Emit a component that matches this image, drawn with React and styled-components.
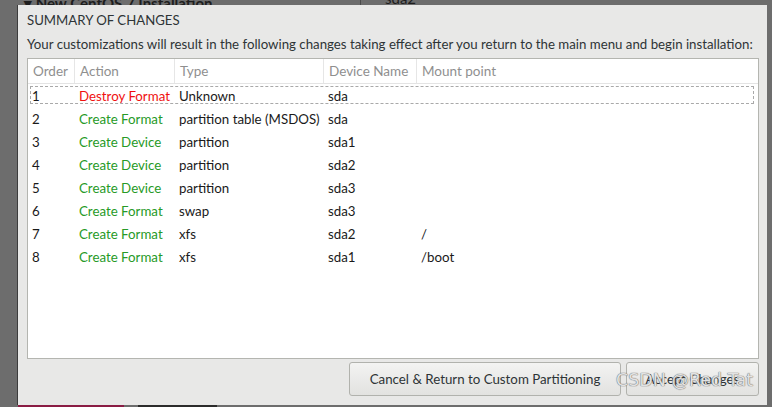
import styled, { createGlobalStyle } from "styled-components";

const GlobalStyle = createGlobalStyle`
  html, body {
    margin: 0;
    padding: 0;
    width: 772px;
    height: 407px;
    overflow: hidden;
    background: #6d6d6d;
    font-family: "Lato", "Open Sans", sans-serif;
  }
`;

const Screen = styled.div`
  position: relative;
  width: 772px;
  height: 407px;
  background: #6d6d6d;
`;

// what sits behind the modal, mostly hidden
const BehindHeader = styled.div`
  position: absolute;
  top: -11px;
  left: 24px;
  right: 0;
  display: flex;
  align-items: center;
  height: 18px;
  color: #1e1e1e;
  font-size: 15px;
  font-weight: 700;
`;

const BehindTitle = styled.div`
  width: 336px;
  border-right: 1px solid #4a4a4a;
  height: 30px;
  display: flex;
  align-items: flex-end;
`;

const BehindDevice = styled.div`
  padding-left: 24px;
  font-weight: 400;
  align-self: flex-end;
`;

const BehindBar = styled.div`
  position: absolute;
  bottom: 0;
  left: ${(p) => p.$left}px;
  width: ${(p) => p.$width}px;
  height: 2px;
  background: ${(p) => p.$color};
`;

const Dialog = styled.div`
  position: absolute;
  left: 17px;
  top: 5px;
  width: 750px;
  height: 400px;
  box-sizing: border-box;
  background: #e8e8e7;
  border-left: 1px solid #3c3c3c;
  padding: 7px 8px 9px 9px;
  display: flex;
  flex-direction: column;
`;

const Title = styled.h1`
  margin: 0;
  font-size: 13.2px;
  font-weight: 400;
  color: #2e3436;
  line-height: 17px;
`;

const Subtitle = styled.p`
  margin: 7px 0 0;
  font-size: 13.25px;
  color: #2e3436;
  line-height: 17px;
  white-space: nowrap;
`;

const TableBox = styled.div`
  margin-top: 5px;
  flex: 1;
  background: #fff;
  border: 1px solid #b4b5b0;
  display: flex;
  flex-direction: column;
`;

const cols = "47px 100px 149px 93px 1fr";

const HeaderRow = styled.div`
  display: grid;
  grid-template-columns: ${cols};
  height: 24px;
  border-bottom: 1px solid #e4e4e4;
`;

const HeaderCell = styled.div`
  display: flex;
  align-items: center;
  padding-left: 5px;
  font-size: 13.5px;
  color: #8f8f8f;
  border-right: ${(p) => (p.$last ? "none" : "1px solid #e6e6e6")};
`;

const Body = styled.div`
  padding-top: 1px;
  display: flex;
  flex-direction: column;
`;

const Row = styled.div`
  position: relative;
  display: grid;
  grid-template-columns: ${cols};
  height: 23px;
  align-items: center;
`;

const FocusRing = styled.div`
  position: absolute;
  left: 2px;
  right: 4px;
  top: 1px;
  bottom: 4px;
  border: 1px dashed #a9a9a9;
  pointer-events: none;
`;

const Cell = styled.div`
  padding-left: 4px;
  font-size: 13.3px;
  color: ${(p) => p.$color || "#1a1a1a"};
  white-space: nowrap;
  position: relative;
  top: -1px;
`;

const Footer = styled.div`
  margin-top: 3px;
  display: flex;
  justify-content: flex-end;
  gap: 5px;
`;

const Button = styled.button`
  height: 34px;
  width: ${(p) => p.$width}px;
  box-sizing: border-box;
  border: 1px solid #b1b2ad;
  border-radius: 3px;
  background: linear-gradient(#f3f3f2, #e2e2e0);
  font-family: inherit;
  font-size: 13.3px;
  color: #2e3436;
  padding: 0;
`;

const Watermark = styled.div`
  position: absolute;
  left: 616px;
  top: 370px;
  font-family: "DejaVu Sans", sans-serif;
  font-size: 17.5px;
  color: #e2e2e2;
  text-shadow: 0 0 1px #6a6a6a, 0 0 1px #6a6a6a;
  pointer-events: none;
  white-space: nowrap;
`;

const RED = "#f01010";
const GREEN = "#279a27";

const rows = [
  ["1", "Destroy Format", "Unknown", "sda", "", RED],
  ["2", "Create Format", "partition table (MSDOS)", "sda", "", GREEN],
  ["3", "Create Device", "partition", "sda1", "", GREEN],
  ["4", "Create Device", "partition", "sda2", "", GREEN],
  ["5", "Create Device", "partition", "sda3", "", GREEN],
  ["6", "Create Format", "swap", "sda3", "", GREEN],
  ["7", "Create Format", "xfs", "sda2", "/", GREEN],
  ["8", "Create Format", "xfs", "sda1", "/boot", GREEN],
];

const headers = ["Order", "Action", "Type", "Device Name", "Mount point"];

export default function App() {
  return (
    <Screen>
      <GlobalStyle />
      <BehindHeader>
        <BehindTitle>▾ New CentOS 7 Installation</BehindTitle>
        <BehindDevice>sda2</BehindDevice>
      </BehindHeader>
      <BehindBar $left={18} $width={106} $color="#8a1c44" />
      <BehindBar $left={138} $width={79} $color="#2b2b2b" />

      <Dialog>
        <Title>SUMMARY OF CHANGES</Title>
        <Subtitle>
          Your customizations will result in the following changes taking effect after you return to the main menu and begin installation:
        </Subtitle>
        <TableBox>
          <HeaderRow>
            {headers.map((h, i) => (
              <HeaderCell key={h} $last={i === headers.length - 1}>
                {h}
              </HeaderCell>
            ))}
          </HeaderRow>
          <Body>
            {rows.map(([order, action, type, device, mount, color], i) => (
              <Row key={order}>
                {i === 0 && <FocusRing />}
                <Cell>{order}</Cell>
                <Cell $color={color}>{action}</Cell>
                <Cell>{type}</Cell>
                <Cell>{device}</Cell>
                <Cell>{mount}</Cell>
              </Row>
            ))}
          </Body>
        </TableBox>
        <Footer>
          <Button $width={272}>Cancel &amp; Return to Custom Partitioning</Button>
          <Button $width={133}>Accept Changes</Button>
        </Footer>
      </Dialog>
      <Watermark>CSDN @Red Tat</Watermark>
    </Screen>
  );
}
